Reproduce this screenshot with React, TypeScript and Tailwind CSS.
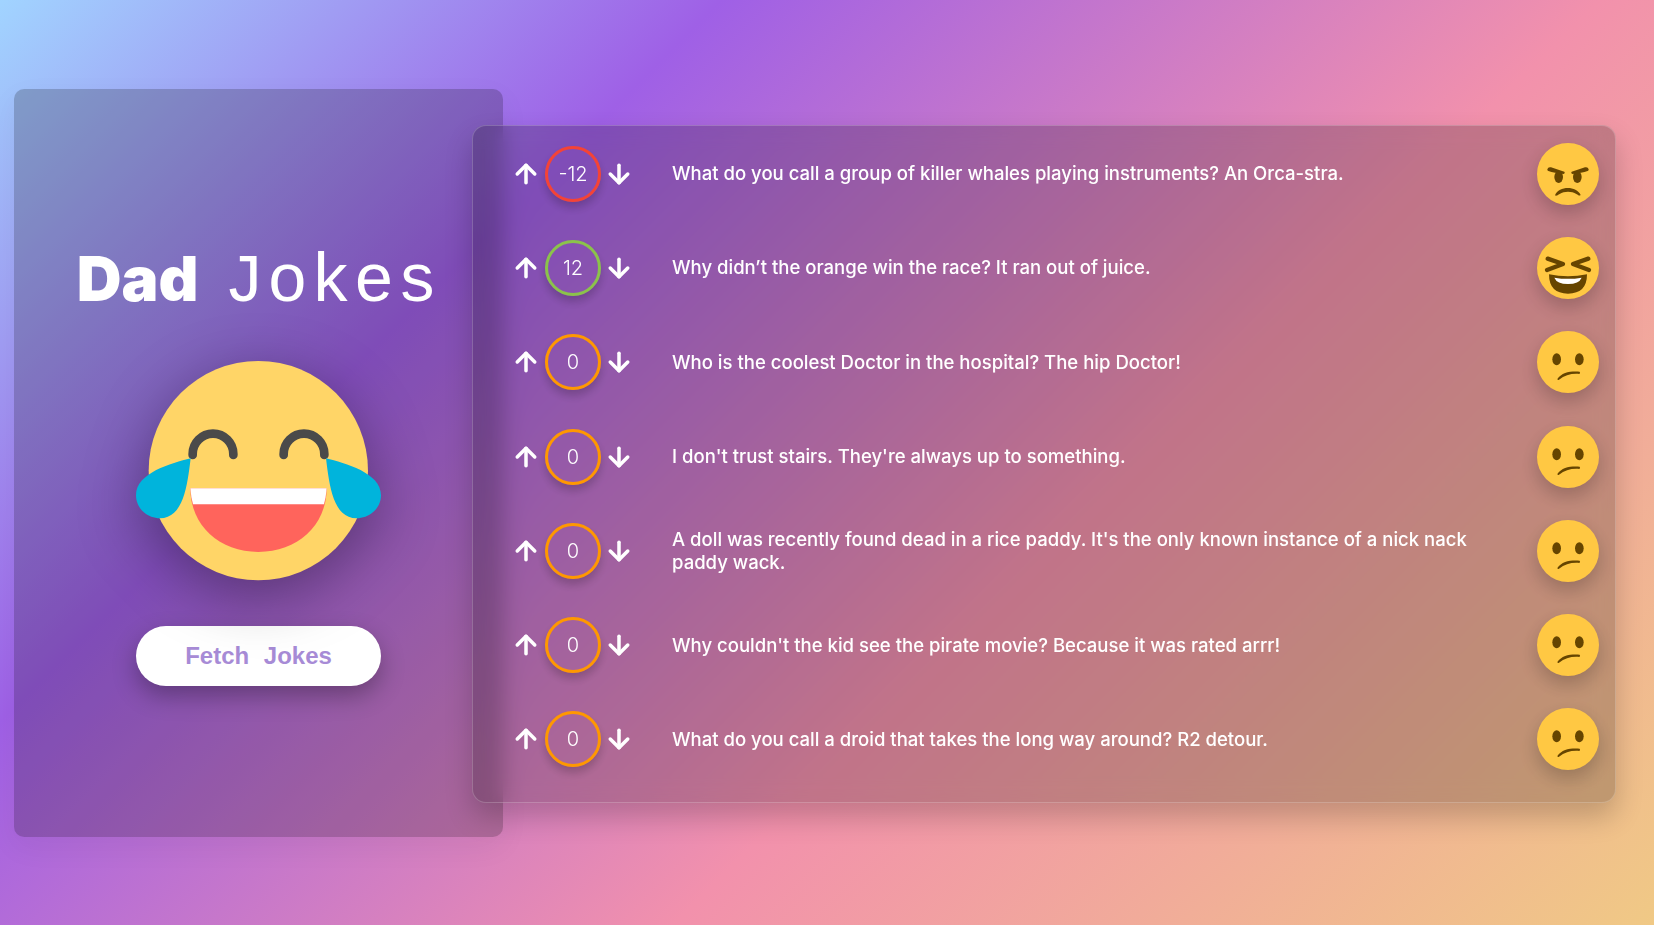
import { ArrowDown, ArrowUp } from "lucide-react";

const JOKES = [
  { score: -12, mood: "angry", text: "What do you call a group of killer whales playing instruments? An Orca-stra." },
  { score: 12, mood: "laugh", text: "Why didn’t the orange win the race? It ran out of juice." },
  { score: 0, mood: "meh", text: "Who is the coolest Doctor in the hospital? The hip Doctor!" },
  { score: 0, mood: "meh", text: "I don't trust stairs. They're always up to something." },
  { score: 0, mood: "meh", text: "A doll was recently found dead in a rice paddy. It's the only known instance of a nick nack paddy wack." },
  { score: 0, mood: "meh", text: "Why couldn't the kid see the pirate movie? Because it was rated arrr!" },
  { score: 0, mood: "meh", text: "What do you call a droid that takes the long way around? R2 detour." },
];

function ringClass(score: number) {
  if (score < 0) return "border-[#f44336]";
  if (score > 0) return "border-[#8bc34a]";
  return "border-[#ff9800]";
}

function BigEmoji() {
  return (
    <svg width="245" height="220" viewBox="108 65 735 660" className="overflow-visible drop-shadow-[0_15px_30px_rgba(0,0,0,0.35)]">
      <circle cx="475" cy="394" r="329" fill="#ffd567" />
      <path d="M278 347v-3a61 61 0 0 1 122 0v3" fill="none" stroke="#4a4a4a" strokeWidth="26" strokeLinecap="round" />
      <path d="M551 347v-3a61 61 0 0 1 122 0v3" fill="none" stroke="#4a4a4a" strokeWidth="26" strokeLinecap="round" />
      <path d="M271 447H680C680 560 590 638 475 638C360 638 271 560 271 447Z" fill="#ff645c" />
      <path d="M271 447H680Q678 475 672 495H279Q273 475 271 447Z" fill="#fff" />
      <path d="M272 357C215 372 108 400 108 468C108 510 145 537 180 537C250 537 262 440 272 357Z" fill="#00b4dc" />
      <path d="M678 357C735 372 843 400 843 468C843 510 805 537 770 537C700 537 688 440 678 357Z" fill="#00b4dc" />
    </svg>
  );
}

function MoodFace({ mood }: { mood: string }) {
  return (
    <svg width="62" height="62" viewBox="0 0 186 186" className="shrink-0 overflow-visible drop-shadow-[0_8px_10px_rgba(0,0,0,0.22)]">
      <circle cx="93" cy="93" r="93" fill="#ffc843" />
      {mood === "angry" && (
        <g fill="#664500">
          <path d="M31 79Q33 71 42 73L82 86Q86 90 80 93Q52 90 34 84Q30 83 31 79Z" />
          <path d="M155 79Q153 71 144 73L104 86Q100 90 106 93Q134 90 152 84Q156 83 155 79Z" />
          <ellipse cx="65" cy="102" rx="13" ry="18" />
          <ellipse cx="121" cy="102" rx="13" ry="18" />
          <path d="M54 157C66 128 118 128 131 156C126 160 124 156 118 153C104 144 82 144 68 153C62 156 58 160 54 157Z" />
        </g>
      )}
      {mood === "laugh" && (
        <g>
          <path d="M32 65L78 81L30 99" fill="none" stroke="#664500" strokeWidth="13" strokeLinecap="round" strokeLinejoin="round" />
          <path d="M154 65L108 81L156 99" fill="none" stroke="#664500" strokeWidth="13" strokeLinecap="round" strokeLinejoin="round" />
          <path d="M36 112Q93 124 150 112Q150 170 93 170Q36 170 36 112Z" fill="#664500" />
          <path d="M52 122Q93 129 134 122Q126 141 93 141Q60 141 52 122Z" fill="#fff" />
        </g>
      )}
      {mood === "meh" && (
        <g fill="#664500">
          <ellipse cx="59" cy="85" rx="13" ry="18" />
          <ellipse cx="127" cy="85" rx="13" ry="18" />
          <path d="M61 144C75 124 100 120 128 122Q131 126 127 129C104 127 84 132 66 146Q62 148 61 144Z" />
        </g>
      )}
    </svg>
  );
}

export default function App() {
  return (
    <div className="h-[925px] w-full overflow-hidden flex items-center pl-[14px] bg-[linear-gradient(135deg,#a1d4ff_0%,#9f60e6_28%,#f291ac_62%,#f0c985_100%)] font-['Inter',sans-serif] text-white">
      <aside className="relative w-[489px] h-[748px] shrink-0 rounded-[10px] bg-black/20 flex flex-col items-center pt-[152px] shadow-[0_10px_30px_rgba(0,0,0,0.05)]">
        <h1 className="h-[75px] flex items-baseline gap-[25px] whitespace-nowrap">
          <span className="text-[62px] leading-[75px] font-black">Dad</span>
          <span className="font-['Liberation_Mono',monospace] text-[68px] leading-[75px] font-normal tracking-[2.5px]">Jokes</span>
        </h1>
        <div className="mt-[45px]">
          <BigEmoji />
        </div>
        <button className="mt-[45px] w-[245px] h-[60px] rounded-[30px] bg-white text-[#a78bd6] font-['Liberation_Sans',sans-serif] font-bold text-[24px] [word-spacing:8px] shadow-[0_10px_25px_rgba(0,0,0,0.3)]">
          Fetch Jokes
        </button>
      </aside>

      <main className="relative -ml-[31px] mt-[2px] w-[1144px] h-[678px] pt-px shrink-0 rounded-[14px] border border-white/20 bg-black/20 backdrop-blur-[10px] shadow-[0_14px_28px_rgba(0,0,0,0.2)]">
        {JOKES.map((joke) => (
          <div key={joke.text} className="h-[94.3px] flex items-center pl-[37px] pr-[16px]">
            <div className="flex items-center">
              <button className="w-[32px] flex justify-center"><ArrowUp size={30} strokeWidth={2.8} /></button>
              <div className={`ml-[3px] w-[56px] h-[56px] rounded-full border-[3px] ${ringClass(joke.score)} flex items-center justify-center text-[20px] font-light shadow-[0_6px_10px_rgba(0,0,0,0.2)]`}>
                {joke.score}
              </div>
              <button className="ml-[2px] w-[32px] flex justify-center"><ArrowDown size={30} strokeWidth={2.8} /></button>
            </div>
            <p className="ml-[37px] w-[800px] mr-auto text-[18.55px] leading-[23px] font-medium">{joke.text}</p>
            <MoodFace mood={joke.mood} />
          </div>
        ))}
      </main>
    </div>
  );
}
